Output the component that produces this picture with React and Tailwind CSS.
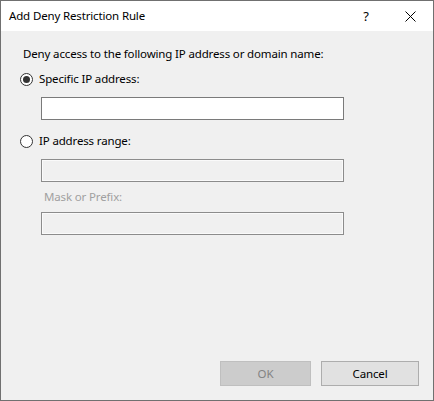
import React from "react";

function Radio({ checked }) {
  return (
    <span className="relative flex h-[13px] w-[13px] shrink-0 items-center justify-center rounded-full border border-[#333333] bg-white">
      {checked && <span className="h-[7px] w-[7px] rounded-full bg-[#333333]" />}
    </span>
  );
}

export default function App() {
  const font = { fontFamily: '"Noto Sans", "Open Sans", sans-serif' };
  return (
    <div
      className="flex h-[401px] w-[434px] flex-col border border-[#707070] bg-[#f0f0f0] text-[11.5px] leading-[16px] tracking-[-0.15px] text-black"
      style={font}
    >
      <div className="flex h-[30px] shrink-0 items-center bg-white pl-[8px]">
        <span>Add Deny Restriction Rule</span>
        <span className="ml-auto w-[14px] text-center text-[13px]">?</span>
        <span className="ml-[31px] mr-[17px] flex h-[12px] w-[12px] items-center justify-center">
          <svg width="11" height="11" viewBox="0 0 11 11">
            <path d="M0.5 0.5 L10.5 10.5 M10.5 0.5 L0.5 10.5" stroke="#000" strokeWidth="1" />
          </svg>
        </span>
      </div>
      <div className="flex flex-1 flex-col pl-[19px] pr-[14px] pt-[15px] pb-[14px]">
        <div className="pl-[3px]">Deny access to the following IP address or domain name:</div>
        <label className="mt-[9px] flex h-[16px] items-center gap-[6px]">
          <Radio checked />
          <span>Specific IP address:</span>
        </label>
        <div className="ml-[21px] mt-[10px] h-[23px] w-[303px] border border-[#7a7a7a] bg-white" />
        <label className="mt-[13px] flex h-[16px] items-center gap-[6px]">
          <Radio />
          <span>IP address range:</span>
        </label>
        <div className="ml-[21px] mt-[10px] h-[23px] w-[303px] border border-[#8c8c8c] bg-[#f0f0f0] shadow-[inset_0_0_0_1px_#fafafa]" />
        <div className="ml-[24px] mt-[7px] text-[#a0a0a0]">Mask or Prefix:</div>
        <div className="ml-[21px] mt-[7px] h-[23px] w-[303px] border border-[#8c8c8c] bg-[#f0f0f0] shadow-[inset_0_0_0_1px_#fafafa]" />
        <div className="mt-auto flex justify-end gap-[10px]">
          <button
            disabled
            className="h-[25px] w-[91px] border border-[#bfbfbf] bg-[#cccccc] text-[11.5px] tracking-[-0.15px] text-[#838383]"
            style={font}
          >
            OK
          </button>
          <button
            className="h-[25px] w-[98px] border border-[#adadad] bg-[#e1e1e1] text-[11.5px] tracking-[-0.15px] text-black"
            style={font}
          >
            Cancel
          </button>
        </div>
      </div>
    </div>
  );
}
